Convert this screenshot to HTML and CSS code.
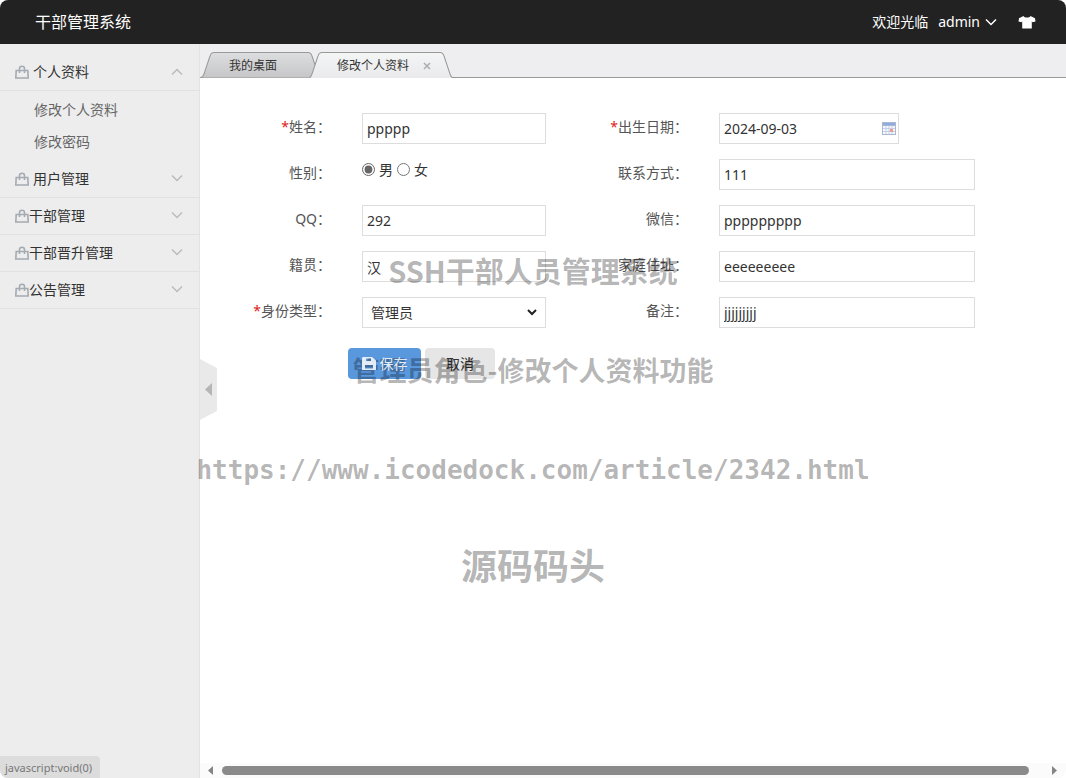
FILE: index.html
```html
<!DOCTYPE html>
<html lang="zh-CN">
<head>
<meta charset="utf-8">
<meta name="viewport" content="width=device-width, initial-scale=1">
<title>干部管理系统</title>
<link rel="stylesheet" href="styles.css">
</head>
<body>
<svg width="0" height="0" class="defs" aria-hidden="true">
  <symbol id="bag" viewBox="0 0 14 14"><path d="M1.200 5.500h11.600l.4 7.500H.8zM4.500 8V3.500a2.500 2.300 0 0 1 5 0V8" fill="none" stroke="currentColor" stroke-width="1.600"/></symbol>
  <symbol id="down" viewBox="0 0 12 8"><path d="M1 1.500l5 5 5-5" fill="none" stroke="currentColor" stroke-width="1.500"/></symbol>
  <linearGradient id="tab-gray" x2="0" y2="1"><stop stop-color="#dddedf"/><stop offset="1" stop-color="#c6c6c8"/></linearGradient>
  <linearGradient id="tab-light" x2="0" y2="1"><stop stop-color="#f4f5f5"/><stop offset="1" stop-color="#eaeaec"/></linearGradient>
</svg>
<div class="app">
  <header class="header">
    <h1 class="brand">干部管理系统</h1>
    <div class="user">
      <span>欢迎光临</span>
      <button class="account" type="button">admin <svg class="chevron" aria-hidden="true"><use href="#down"/></svg></button>
      <button class="skin" type="button" aria-label="换肤"><svg width="18" height="14" viewBox="0 0 18 14" aria-hidden="true"><path d="M5.500 1L1 3.200.500 6.500l3 .8.700-1V13.500h9.600V6.300l.7 1 3-.8-.5-3.300L12.500 1C11.500 3 6.500 3 5.500 1z" fill="#fff"/></svg></button>
    </div>
  </header>
  <div class="body">
    <nav class="sidebar">
      <button class="menu" type="button"><svg class="bag" aria-hidden="true"><use href="#bag"/></svg><span class="menu-text spaced">个人资料</span><svg class="chevron up" aria-hidden="true"><use href="#down"/></svg></button>
      <ul class="submenu">
        <li><a href="#profile">修改个人资料</a></li>
        <li><a href="#password">修改密码</a></li>
      </ul>
      <button class="menu" type="button"><svg class="bag" aria-hidden="true"><use href="#bag"/></svg><span class="menu-text spaced">用户管理</span><svg class="chevron" aria-hidden="true"><use href="#down"/></svg></button>
      <button class="menu" type="button"><svg class="bag" aria-hidden="true"><use href="#bag"/></svg><span class="menu-text">干部管理</span><svg class="chevron" aria-hidden="true"><use href="#down"/></svg></button>
      <button class="menu" type="button"><svg class="bag" aria-hidden="true"><use href="#bag"/></svg><span class="menu-text">干部晋升管理</span><svg class="chevron" aria-hidden="true"><use href="#down"/></svg></button>
      <button class="menu" type="button"><svg class="bag" aria-hidden="true"><use href="#bag"/></svg><span class="menu-text">公告管理</span><svg class="chevron" aria-hidden="true"><use href="#down"/></svg></button>
      <div class="status">javascript:void(0)</div>
    </nav>
    <main class="main">
      <div class="tabs">
        <button class="tab" type="button"><svg class="tab-shape" viewBox="0 0 120 26" preserveAspectRatio="none" aria-hidden="true"><path d="M0 25.500Q2 25 3 22L9 4Q10 .5 13 .5H107Q110 .5 111 4L117 22Q118 25 120 25.500" fill="url(#tab-gray)" stroke="#999"/></svg><span>我的桌面</span></button>
        <div class="tab active"><svg class="tab-shape" viewBox="0 0 144 26" preserveAspectRatio="none" aria-hidden="true"><path d="M0 26Q2 25 3 22L9 4Q10 .5 13 .5H131Q134 .5 135 4L141 22Q142 25 144 26" fill="url(#tab-light)" stroke="#999"/></svg><span>修改个人资料</span><button class="close" type="button" aria-label="关闭"><svg width="8" height="8" viewBox="0 0 8 8" aria-hidden="true"><path d="M1 1l6 6M7 1L1 7" stroke="#a9afb3" stroke-width="1.600"/></svg></button></div>
      </div>
      <button class="collapse" type="button" aria-label="收起菜单"><svg width="17" height="61" viewBox="0 0 17 61" aria-hidden="true"><path d="M0 0l17 9v43L0 61z" fill="#e9e9e9"/><path d="M12 24v13l-7-6.500z" fill="#b5b5b5"/></svg></button>
      <form class="form">
        <div class="fields">
          <label for="name"><i>*</i>姓名：</label><input class="box" id="name" value="ppppp">
          <label for="birth"><i>*</i>出生日期：</label>
          <div class="date"><input class="box" id="birth" value="2024-09-03"><svg class="calendar" viewBox="0 0 14 13" aria-hidden="true"><path d="M0 0h14v13H0z" fill="#a9b7d0"/><path d="M1 1h12v2H1z" fill="#8fabdf"/><path d="M1 4h12v8H1z" fill="#f5f8fd"/><path d="M1 6.500h12M1 9.500h12M4 4v8M7 4v8M10 4v8" stroke="#c3d0e8"/><path d="M8 7h3v3H8z" fill="#ef9b8c"/></svg></div>
          <span class="label" id="sex">性别：</span>
          <div class="radios" role="radiogroup" aria-labelledby="sex"><input type="radio" name="sex" id="male" checked><label for="male">男</label><input type="radio" name="sex" id="female"><label for="female">女</label></div>
          <label for="phone">联系方式：</label><input class="box" id="phone" value="111">
          <label for="qq">QQ：</label><input class="box" id="qq" value="292">
          <label for="wechat">微信：</label><input class="box" id="wechat" value="ppppppppp">
          <label for="native">籍贯：</label><input class="box" id="native" value="汉">
          <label for="address">家庭住址：</label><input class="box" id="address" value="eeeeeeeee">
          <label for="role"><i>*</i>身份类型：</label>
          <div class="select"><select class="box" id="role"><option>管理员</option></select><svg class="arrow" viewBox="0 0 10 7" aria-hidden="true"><path d="M1 1l4 4 4-4" fill="none" stroke="#222" stroke-width="2"/></svg></div>
          <label for="note">备注：</label><input class="box" id="note" value="jjjjjjjjj">
        </div>
        <div class="actions">
          <button class="btn save" type="button"><span class="save-text"><svg width="14" height="13" viewBox="0 0 14 13" aria-hidden="true"><path fill-rule="evenodd" d="M1 0h9l4 3.500V13H0V1zM4 1.500V4h5V1.500zM3 8v3.500h8V8z" fill="#fff"/></svg>保存</span></button>
          <button class="btn" type="button">取消</button>
        </div>
      </form>
      <div class="scrollbar" aria-hidden="true">
        <svg width="5" height="9" viewBox="0 0 5 9"><path d="M5 0v9L0 4.500z" fill="#858585"/></svg>
        <div class="thumb"></div>
        <svg width="5" height="9" viewBox="0 0 5 9"><path d="M0 0v9l5-4.500z" fill="#858585"/></svg>
      </div>
    </main>
  </div>
  <div class="watermark">
    <p class="mark-title">SSH干部人员管理系统</p>
    <p class="mark-sub">管理员角色-修改个人资料功能</p>
    <p class="mark-url">https://www.icodedock.com/article/2342.html</p>
    <p class="mark-name">源码码头</p>
  </div>
</div>
</body>
</html>
```

FILE: styles.css
```css
* { box-sizing: border-box; }
body {
  margin: 0;
  background: #fff;
  color: #333;
  font: 14px/20px "Noto Sans", "Noto Sans CJK SC", sans-serif;
}
button, input, select { font: inherit; color: inherit; }
button { padding: 0; border: 0; background: none; cursor: pointer; }
svg { display: block; flex: none; }
.defs { position: absolute; }
.app {
  position: relative;
  display: flex;
  flex-direction: column;
  min-height: 100vh;
  border-radius: 8px;
  overflow: hidden;
}

.header {
  display: flex;
  align-items: center;
  justify-content: space-between;
  height: 44px;
  padding: 0 30px 0 35px;
  background: #222;
  color: #fff;
}
.brand { margin: 0; font-size: 16px; font-weight: 400; }
.user { display: flex; align-items: center; gap: 10px; }
.account { display: flex; align-items: center; gap: 5px; }
.skin { margin-left: 11px; }
.chevron { width: 12px; height: 8px; }

.body { display: flex; flex: 1; }
.sidebar {
  display: flex;
  flex-direction: column;
  flex: none;
  width: 200px;
  padding-top: 10px;
  border-right: 1px solid #e3e3e3;
  background: #ededed;
}
.menu {
  display: flex;
  align-items: center;
  height: 37px;
  padding: 0 16px 0 15px;
  border-bottom: 1px solid #e1e1e1;
  text-align: left;
}
.menu .chevron { margin: 0 0 3px auto; color: #bbb; }
.menu .up { margin-bottom: 0; transform: rotate(180deg); }
.bag { width: 14px; height: 14px; color: #a4abb3; }
.spaced { margin-left: 4px; }
.submenu { margin: 0; padding: 3px 0 3px 34px; list-style: none; }
.submenu a { display: block; color: #666; line-height: 32px; text-decoration: none; }
.status {
  align-self: flex-start;
  margin-top: auto;
  padding: 2px 8px 0 5px;
  border-radius: 0 4px 0 0;
  background: #dcdcdc;
  color: #777;
  font-size: 11px;
}

.main { position: relative; display: flex; flex: 1; flex-direction: column; min-width: 0; }
.tabs {
  display: flex;
  align-items: flex-end;
  height: 34px;
  padding-left: 1px;
  background: #eeeef0;
  box-shadow: inset 0 -1px #999;
}
.tab {
  position: relative;
  display: flex;
  align-items: center;
  height: 26px;
  padding: 2px 44px 0 28px;
  font-size: 12px;
}
.active { margin-left: -12px; padding-right: 22px; }
.tab-shape { position: absolute; inset: 0; width: 100%; height: 100%; }
.tab span, .close { position: relative; }
.close { margin-left: 14px; }
.collapse { position: absolute; top: 315px; left: 0; }

.form { flex: 1; padding: 35px 91px 20px 0; }
.fields {
  display: grid;
  grid-template-columns: 131fr 184fr 111fr 256fr;
  grid-auto-rows: 31px;
  gap: 15px 31px;
}
.fields > label, .label { padding-top: 4px; color: #555; text-align: right; white-space: nowrap; }
.fields i { color: #d22; font-style: normal; }
.box {
  width: 100%;
  min-width: 0;
  height: 31px;
  padding: 0 4px;
  border: 1px solid #ddd;
  border-radius: 0;
  background: #fff;
  outline: 0;
}
.date { position: relative; width: 180px; }
.calendar { position: absolute; top: 9px; right: 3px; width: 14px; height: 13px; }
.radios { display: flex; align-items: center; height: 21px; }
.radios input { width: 13px; height: 13px; margin: 0; accent-color: #666; }
.radios label { margin: 0 4px; }
.select { position: relative; }
.select .box { padding-left: 8px; appearance: none; }
.arrow { position: absolute; top: 12px; right: 9px; width: 10px; height: 7px; pointer-events: none; }
.actions { display: flex; gap: 4px; margin: 20px 0 0 148px; }
.btn {
  display: flex;
  align-items: center;
  justify-content: center;
  width: 70px;
  height: 31px;
  border-radius: 4px;
  background: #e6e6e6;
}
.save { width: 73px; background: #5a98de; color: #fff; }
.save-text { position: relative; z-index: 2; display: flex; align-items: center; gap: 4px; opacity: 0.85; }

.scrollbar { display: flex; align-items: center; gap: 9px; height: 15px; padding: 0 9px 0 8px; background: #fbfbfb; }
.thumb { flex: 1; height: 9px; margin-right: 14px; border-radius: 5px; background: #8a8a8a; }

.watermark {
  position: absolute;
  z-index: 1;
  top: 250px;
  left: 0;
  width: 100%;
  color: rgba(0, 0, 0, 0.3);
  font-family: "Noto Sans CJK SC", sans-serif;
  font-weight: 700;
  line-height: 40px;
  text-align: center;
  white-space: nowrap;
  pointer-events: none;
}
.watermark p { margin: 0 0 60px; }
.mark-title { font-size: 29px; }
.mark-sub { font-size: 27px; }
.mark-url { font-family: "DejaVu Sans Mono", monospace; font-size: 26px; }
.watermark .mark-name { margin: -6px 0 0; font-size: 36px; }
```
